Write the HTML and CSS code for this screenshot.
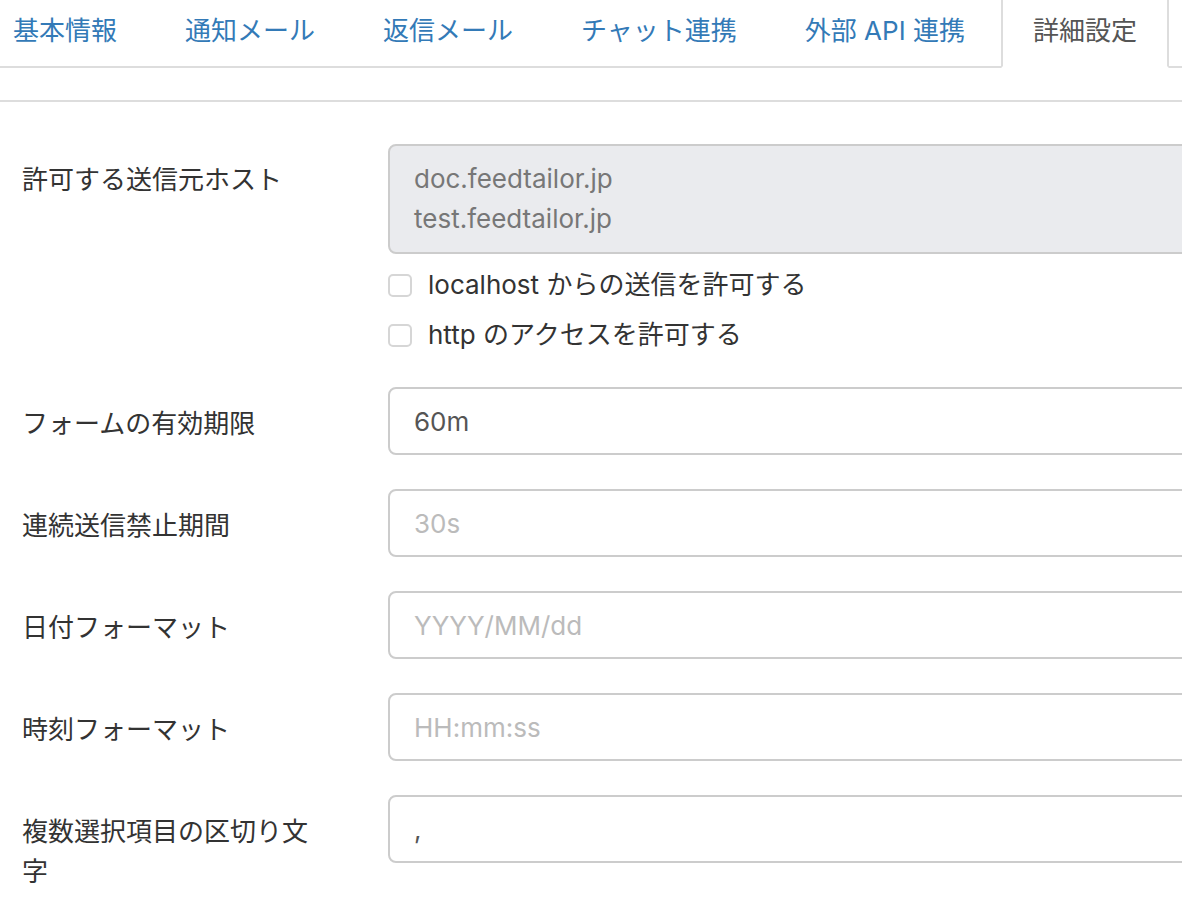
FILE: index.html
```html
<!DOCTYPE html>
<html lang="ja">
  <head>
    <meta charset="UTF-8" />
    <meta name="viewport" content="width=device-width, initial-scale=1.0" />
    <title>詳細設定</title>
    <link rel="stylesheet" href="styles.css">
  </head>
  <body>
    <ul class="nav-tabs">
      <li><a href="#">基本情報</a></li>
      <li><a href="#">通知メール</a></li>
      <li><a href="#">返信メール</a></li>
      <li><a href="#">チャット連携</a></li>
      <li><a href="#">外部 API 連携</a></li>
      <li class="active"><a href="#">詳細設定</a></li>
    </ul>

    <div class="tab-content">
      <form class="settings-form">
        <div class="form-group">
          <label class="control-label">許可する送信元ホスト</label>
          <div class="controls">
            <textarea class="form-control hosts" readonly>doc.feedtailor.jp
test.feedtailor.jp</textarea>
            <label class="checkbox">
              <input type="checkbox" />
              <span>localhost からの送信を許可する</span>
            </label>
            <label class="checkbox">
              <input type="checkbox" />
              <span>http のアクセスを許可する</span>
            </label>
          </div>
        </div>

        <div class="form-group">
          <label class="control-label" for="expire">フォームの有効期限</label>
          <div class="controls">
            <input class="form-control" id="expire" type="text" value="60m" />
          </div>
        </div>

        <div class="form-group">
          <label class="control-label" for="interval">連続送信禁止期間</label>
          <div class="controls">
            <input class="form-control" id="interval" type="text" placeholder="30s" />
          </div>
        </div>

        <div class="form-group">
          <label class="control-label" for="date-format">日付フォーマット</label>
          <div class="controls">
            <input class="form-control" id="date-format" type="text" placeholder="YYYY/MM/dd" />
          </div>
        </div>

        <div class="form-group">
          <label class="control-label" for="time-format">時刻フォーマット</label>
          <div class="controls">
            <input class="form-control" id="time-format" type="text" placeholder="HH:mm:ss" />
          </div>
        </div>

        <div class="form-group">
          <label class="control-label" for="separator">複数選択項目の区切り文字</label>
          <div class="controls">
            <input class="form-control" id="separator" type="text" value="," />
          </div>
        </div>
      </form>
    </div>
  </body>
</html>
```

FILE: styles.css
```css
* {
  margin: 0;
  padding: 0;
  box-sizing: border-box;
}

body {
  font-family: "Inter", "Noto Sans CJK JP", sans-serif;
  font-size: 26px;
  line-height: 40px;
  color: #333;
  background: white;
  overflow: hidden;
  width: 1182px;
  height: 912px;
}

.nav-tabs {
  list-style: none;
  display: flex;
  margin: -11px 0 0 -19px;
  border-bottom: 2px solid #ddd;
  white-space: nowrap;
}

.nav-tabs li {
  margin-right: 4px;
  margin-bottom: -2px;
}

.nav-tabs li a {
  display: block;
  padding: 20px 30px 15px;
  border: 2px solid transparent;
  border-radius: 8px 8px 0 0;
  color: #337ab7;
  text-decoration: none;
}

.nav-tabs li.active a {
  color: #555;
  background: white;
  border-color: #ddd;
  border-bottom-color: white;
}

.tab-content {
  margin-top: 32px;
  border-top: 2px solid #ddd;
  padding-top: 42px;
}

.settings-form {
  width: 1400px;
}

.form-group {
  display: grid;
  grid-template-columns: 366px 1fr;
  padding-left: 22px;
  margin-bottom: 34px;
}

.form-group:first-child {
  margin-bottom: 32px;
}

.control-label {
  padding-top: 17px;
  max-width: 300px;
  color: #333;
}

.form-group:first-child .control-label {
  padding-top: 16px;
}

.form-control {
  display: block;
  width: 100%;
  height: 68px;
  padding: 12px 24px;
  font-family: inherit;
  font-size: 26px;
  line-height: 40px;
  color: #555;
  background: white;
  border: 2px solid #ccc;
  border-radius: 8px;
  outline: none;
}

.form-control::placeholder {
  color: #bbb;
}

.hosts {
  height: 110px;
  padding-top: 13px;
  padding-bottom: 13px;
  resize: none;
  background: #eaebee;
  color: #777;
  overflow: hidden;
}

.checkbox {
  display: flex;
  align-items: center;
  gap: 16px;
  margin-top: 10px;
  color: #333;
}

.hosts + .checkbox {
  margin-top: 11px;
}

.checkbox input {
  appearance: none;
  width: 24px;
  height: 23px;
  border: 2px solid #d6d6d6;
  border-radius: 5px;
  background: white;
}
```
